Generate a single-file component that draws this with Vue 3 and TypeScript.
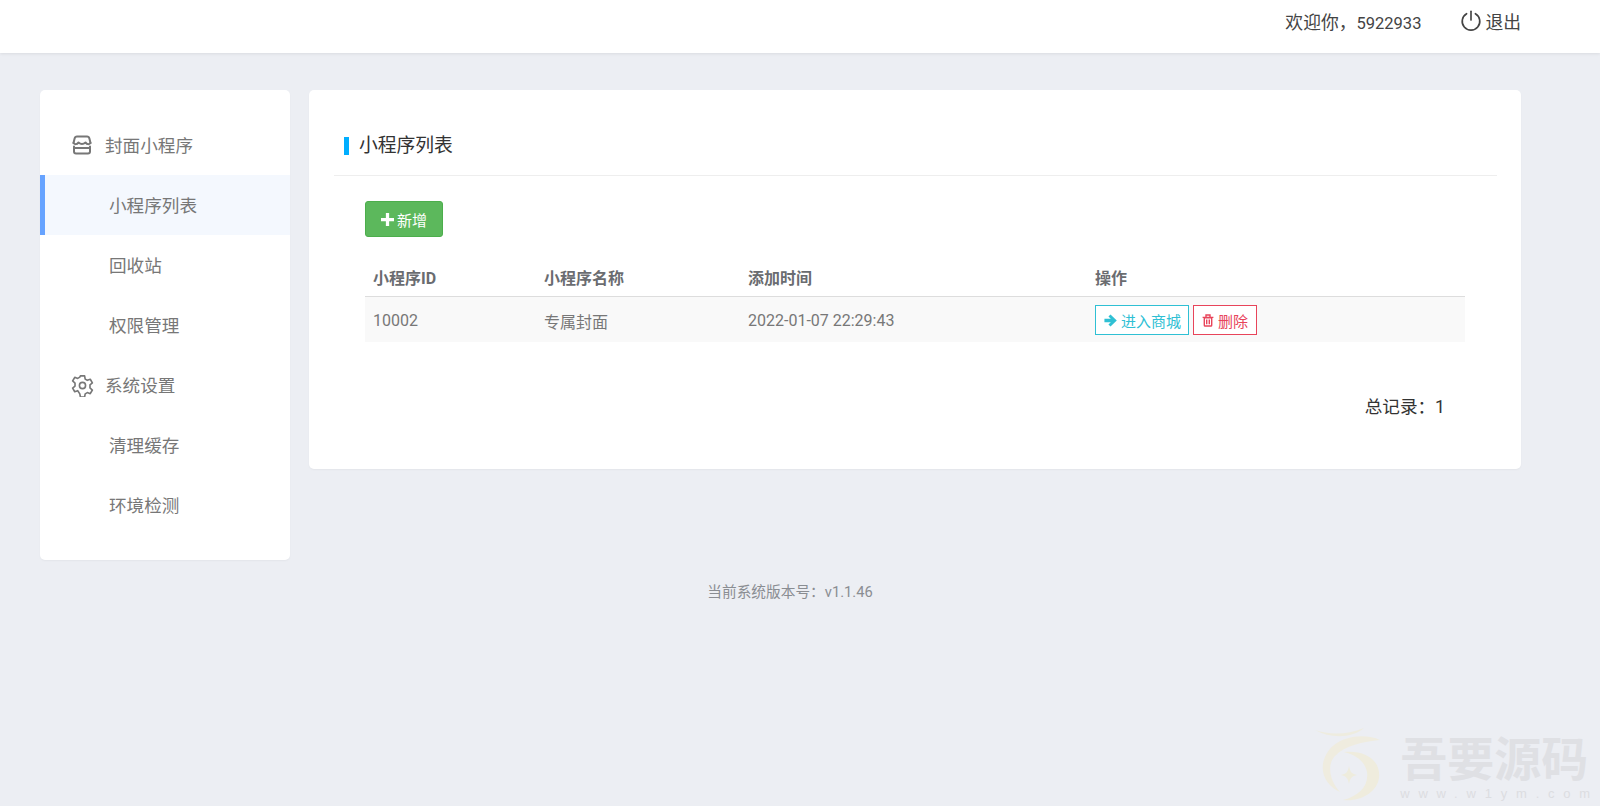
<script setup lang="ts">
interface MenuItem {
  label: string;
  icon?: "store" | "gear";
  active?: boolean;
}

const menu: MenuItem[] = [
  { label: "封面小程序", icon: "store" },
  { label: "小程序列表", active: true },
  { label: "回收站" },
  { label: "权限管理" },
  { label: "系统设置", icon: "gear" },
  { label: "清理缓存" },
  { label: "环境检测" },
];
</script>

<template>
  <div class="page">
    <header class="top">
      <span class="top__hello">欢迎你，<span class="top__id">5922933</span></span>
      <a class="top__out">
        <svg width="22" height="22" viewBox="0 0 20 20" fill="none" stroke="#444" stroke-width="1.500" stroke-linecap="round">
          <path d="M6 3.400a8 8 0 1 0 8 0" />
          <path d="M10 1.200v8" />
        </svg>
        退出
      </a>
    </header>

    <div class="body">
      <aside class="side">
        <div
          v-for="item in menu"
          :key="item.label"
          class="side__item"
          :class="{ 'side__item--active': item.active, 'side__item--group': item.icon }"
        >
          <svg v-if="item.icon === 'store'" class="side__icon" width="20" height="20" viewBox="0 0 20 20" fill="none" stroke="#777" stroke-width="2" stroke-linejoin="round" stroke-linecap="round">
            <path d="M1.500 8 2.600 3.500Q3.100 1.500 5 1.500H15Q16.900 1.500 17.400 3.500L18.500 8" />
            <path d="M1.500 8Q4 10.500 6.500 7.500 10 10.500 13.500 7.500 16 10.500 18.500 8" />
            <path d="M2 11.500V16.500Q2 18.500 4 18.500H16Q18 18.500 18 16.500V11.500" />
            <path d="M2 13H18" />
          </svg>
          <svg v-else-if="item.icon === 'gear'" class="side__icon side__icon--gear" width="23" height="23" viewBox="0 0 24 24" fill="none" stroke="#777" stroke-width="1.700" stroke-linejoin="round">
            <circle cx="12" cy="12" r="3.200" />
            <path d="M9.800 2h4.400l.6 3.300 2.200 1.300 3.100-1.100 2.200 3.800-2.500 2.100v3.200l2.500 2.100-2.200 3.800-3.100-1.100-2.200 1.300-.6 3.300H9.800l-.6-3.300L7 17.400l-3.100 1.100-2.200-3.800 2.500-2.100v-3.200L1.700 7.300l2.200-3.800L7 4.600l2.200-1.300z" />
          </svg>
          <span class="side__label">{{ item.label }}</span>
        </div>
      </aside>

      <main class="card">
        <div class="card__head">
          <h2 class="card__title">小程序列表</h2>
        </div>
        <div class="card__body">
          <button class="add" type="button">
            <svg width="13" height="13" viewBox="0 0 12 12" fill="#fff"><path d="M4.500 0h3v4.500H12v3H7.500V12h-3V7.500H0v-3h4.500z" /></svg>
            新增
          </button>

          <table class="list">
            <thead>
              <tr>
                <th class="c1">小程序ID</th>
                <th class="c2">小程序名称</th>
                <th class="c3">添加时间</th>
                <th>操作</th>
              </tr>
            </thead>
            <tbody>
              <tr>
                <td>10002</td>
                <td>专属封面</td>
                <td>2022-01-07 22:29:43</td>
                <td>
                  <div class="ops">
                    <a class="op op--go">
                      <svg width="13" height="13" viewBox="0 0 12 12" fill="#2fc0d4"><path d="M6 .4 11.800 6 6 11.600 4.100 9.700l2.200-2.100H.4V4.400h5.900L4.100 2.300z" /></svg>
                      进入商城
                    </a>
                    <a class="op op--del">
                      <svg width="12" height="13" viewBox="0 0 12 13" fill="none" stroke="#e8445a" stroke-width="1.400"><path d="M2.300 3.800h7.400v7.400a.8.8 0 0 1-.8.8H3.100a.8.8 0 0 1-.8-.8zM.6 3.400h10.800M4 3V1h4v2M4.700 5.600v4.600M7.300 5.600v4.600" /></svg>
                      删除
                    </a>
                  </div>
                </td>
              </tr>
            </tbody>
          </table>

          <p class="total">总记录：1</p>
        </div>
      </main>
    </div>

    <footer class="foot">当前系统版本号：v1.1.46</footer>

    <div class="mark">
      <svg class="mark__logo" width="66" height="76" viewBox="0 0 66 76" fill="none">
        <path d="M0 2C14 7 32 7 49 0 38 10 16 11 0 2z" fill="#eeecdf" />
        <path d="M65 12C50 5 25 8 14 22 2 38 8 56 25 64 14 52 12 36 20 28 30 17 48 14 65 12z" fill="#efecdf" />
        <path d="M29 24C50 22 66 32 64 50 62 64 46 74 28 72 44 68 54 58 52 44 50 34 42 27 29 24z" fill="#efecdd" />
        <path d="M34 38C35 44 37 46 42 47 37 48 35 50 34 56 33 50 31 48 26 47 31 46 33 44 34 38z" fill="#eeecdd" />
      </svg>
      <div class="mark__text">
        <div class="mark__cn">吾要源码</div>
        <div class="mark__en">www.w1ym.com</div>
      </div>
    </div>
  </div>
</template>

<style scoped>
.page {
  position: relative;
  height: 806px;
  overflow: hidden;
  background: #eceef3;
  font-family: "Roboto", "Noto Sans CJK SC", sans-serif;
  color: #777;
}
.top {
  display: flex;
  align-items: center;
  justify-content: flex-end;
  height: 53px;
  padding: 0 79px 11px 0;
  box-sizing: border-box;
  background: #fff;
  box-shadow: 0 1px 3px rgba(0, 0, 0, 0.08);
  font-size: 17.800px;
  color: #444;
}
.top__hello {
  margin-right: 39px;
}
.top__id {
  font-size: 16.500px;
}
.top__out {
  display: flex;
  align-items: center;
  gap: 3px;
}
.body {
  display: flex;
  align-items: flex-start;
  gap: 19px;
  padding: 37px 79px 0 40px;
}
.side {
  flex: 0 0 250px;
  padding: 25px 0;
  background: #fff;
  border-radius: 5px;
  box-shadow: 0 1px 2px rgba(0, 0, 0, 0.04);
}
.side__item {
  display: flex;
  align-items: center;
  height: 60px;
  padding-left: 69px;
  font-size: 17.600px;
  color: #777;
}
.side__label {
  margin-top: -2px;
}
.side__item--group {
  padding-left: 32px;
}
.side__icon {
  margin-right: 13px;
}
.side__icon--gear {
  margin-left: -1px;
  margin-right: 11px;
}
.side__item--active {
  padding-left: 64px;
  background: #f4f8fe;
  border-left: 5px solid #66a3ff;
}
.card {
  flex: 1;
  height: 379px;
  background: #fff;
  border-radius: 5px;
  box-shadow: 0 1px 2px rgba(0, 0, 0, 0.04);
}
.card__head {
  margin: 0 24px 0 25px;
  height: 85px;
  display: flex;
  align-items: flex-end;
  border-bottom: 1px solid #eee;
}
.card__title {
  margin: 0 0 20px 10px;
  padding-left: 10px;
  border-left: 5px solid #00aeff;
  font-size: 18.800px;
  line-height: 18px;
  font-weight: 400;
  color: #333;
}
.card__body {
  padding: 25px 56px 0;
}
.add {
  display: flex;
  align-items: center;
  justify-content: center;
  gap: 3px;
  width: 78px;
  height: 36px;
  padding: 0;
  background: #5cb85c;
  border: 1px solid #4cae4c;
  border-radius: 3px;
  color: #fff;
  font: inherit;
  font-size: 15px;
}
.list {
  width: 100%;
  margin-top: 23px;
  border-collapse: collapse;
  table-layout: fixed;
  font-size: 16px;
}
.list th {
  box-sizing: border-box;
  height: 36px;
  padding: 0 8px 2px;
  text-align: left;
  font-weight: 700;
  color: #6a6c70;
  border-bottom: 1px solid #ddd;
}
.c1 {
  width: 171px;
}
.c2 {
  width: 204px;
}
.c3 {
  width: 347px;
}
.list td {
  box-sizing: border-box;
  height: 46px;
  padding: 3px 8px 0;
  background: #f9f9f9;
  color: #777;
}
.ops {
  display: flex;
  gap: 4px;
  margin-top: -1px;
}
.op {
  display: flex;
  align-items: center;
  gap: 4px;
  height: 30px;
  padding: 0 7px 0 8px;
  box-sizing: border-box;
  border: 1px solid;
  font-size: 15px;
  background: #fff;
}
.op--go {
  color: #2fc0d4;
  border-color: #2fc0d4;
}
.op--del {
  padding-right: 8px;
  color: #e8445a;
  border-color: #e8445a;
}
.total {
  margin: 51px 20px 0 0;
  text-align: right;
  font-size: 17.600px;
  color: #333;
}
.foot {
  margin-top: 20px;
  padding-right: 20px;
  text-align: center;
  font-size: 14.700px;
  color: #8a8d92;
}
.mark {
  position: absolute;
  right: 1px;
  bottom: 2px;
  display: flex;
  gap: 19px;
  align-items: flex-start;
}
.mark__logo {
  margin-top: -6px;
}
.mark__cn {
  font-family: "Liberation Serif", "Noto Sans CJK SC", serif;
  font-size: 47px;
  line-height: 52px;
  font-weight: 700;
  color: #dfe0e4;
}
.mark__en {
  font-family: "Liberation Sans", sans-serif;
  font-size: 13px;
  letter-spacing: 8.800px;
  color: #dcdde1;
}
</style>

<style>
html,
body {
  margin: 0;
  background: #eceef3;
}
</style>
